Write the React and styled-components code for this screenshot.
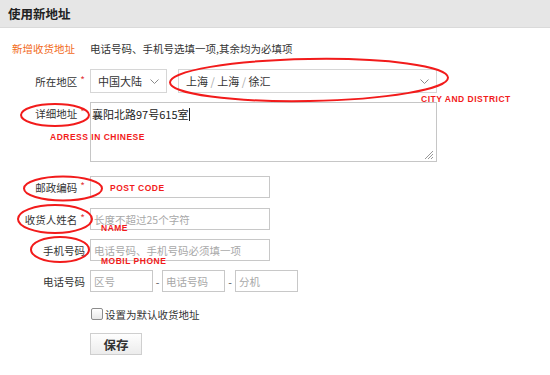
import React from 'react'
import styled, { createGlobalStyle } from 'styled-components'

const Global = createGlobalStyle`
  html, body {
    margin: 0;
    padding: 0;
    background: #fff;
  }
  body {
    font-family: "Noto Sans CJK SC", "Noto Sans", sans-serif;
    color: #333;
  }
`

const Chevron = () => (
  <svg width="9" height="5" viewBox="0 0 9 5">
    <path d="M0.5 0.5 L4.5 4.5 L8.5 0.5" fill="none" stroke="#8a8a8a" strokeWidth="1" />
  </svg>
)

const Grip = () => (
  <svg width="10" height="10" viewBox="0 0 10 10">
    <path d="M1 9 L9 1 M4 9 L9 4 M7 9 L9 7" stroke="#999" strokeWidth="1" fill="none" />
  </svg>
)

const App = () => {
  return (
    <Page>
      <Global />
      <Header>
        <Title>使用新地址</Title>
      </Header>
      <Form>
        <Intro>
          <Tag>新增收货地址</Tag>
          <Hint>电话号码、手机号选填一项,其余均为必填项</Hint>
        </Intro>

        <Row $top={13}>
          <Label $h={24}>所在地区<Star>*</Star></Label>
          <Select $w={77}>
            <span>中国大陆</span>
            <Chevron />
          </Select>
          <Select $w={259} $ml={11}>
            <span>上海 <Sep>/</Sep> 上海 <Sep>/</Sep> 徐汇</span>
            <Chevron />
          </Select>
        </Row>

        <Row $top={9}>
          <Label $h={22}>详细地址<Star>*</Star></Label>
          <TextArea>
            <span>襄阳北路97号615室</span>
            <Caret />
            <GripBox><Grip /></GripBox>
          </TextArea>
        </Row>

        <Row $top={14}>
          <Label $h={22}>邮政编码<Star>*</Star></Label>
          <Input $w={180} />
        </Row>

        <Row $top={10}>
          <Label $h={22}>收货人姓名<Star>*</Star></Label>
          <Input $w={180}><Placeholder>长度不超过25个字符</Placeholder></Input>
        </Row>

        <Row $top={9}>
          <Label $h={22}>手机号码</Label>
          <Input $w={180}><Placeholder>电话号码、手机号码必须填一项</Placeholder></Input>
        </Row>

        <Row $top={9}>
          <Label $h={22}>电话号码</Label>
          <Input $w={63}><Placeholder>区号</Placeholder></Input>
          <Dash $w={9}>-</Dash>
          <Input $w={63}><Placeholder>电话号码</Placeholder></Input>
          <Dash $w={10}>-</Dash>
          <Input $w={63}><Placeholder>分机</Placeholder></Input>
        </Row>

        <Row $top={14}>
          <Label $h={16} />
          <Check>
            <Box />
            设置为默认收货地址
          </Check>
        </Row>

        <Row $top={11}>
          <Label $h={22} />
          <SaveButton>保存</SaveButton>
        </Row>
      </Form>

      <Marks>
        <svg width="550" height="375" viewBox="0 0 550 375">
          <g fill="none" stroke="#f21b1b" strokeWidth="2">
            <ellipse cx="309" cy="80" rx="139" ry="21" transform="rotate(-1 309 80)" />
            <ellipse cx="55" cy="115" rx="34" ry="11" />
            <ellipse cx="63" cy="188.5" rx="39" ry="12" />
            <ellipse cx="55" cy="219" rx="37" ry="14" />
            <ellipse cx="60" cy="249.5" rx="29" ry="12.5" />
          </g>
        </svg>
        <Note $x={421} $y={94}>CITY AND DISTRICT</Note>
        <Note $x={50} $y={132}>ADRESS IN CHINESE</Note>
        <Note $x={110} $y={183}>POST CODE</Note>
        <Note $x={101} $y={223}>NAME</Note>
        <Note $x={101} $y={256}>MOBIL PHONE</Note>
      </Marks>
    </Page>
  )
}

export default App

const Page = styled.div`
position: relative;
width: 550px;
height: 375px;
overflow: hidden;
font-size: 10.5px;
`

const Header = styled.div`
height: 27px;
background-color: #e6e6e6;
border-bottom: 1px solid #dadada;
display: flex;
align-items: center;
padding-left: 8px;
`

const Title = styled.h1`
margin: 0;
font-size: 12.5px;
font-weight: bold;
color: #222;
`

const Form = styled.div`
display: flex;
flex-direction: column;
padding-top: 12px;
`

const Intro = styled.div`
display: flex;
align-items: center;
height: 16px;
`

const Tag = styled.div`
width: 90px;
box-sizing: border-box;
padding-left: 12px;
color: #f26a21;
`

const Hint = styled.div`
color: #333;
`

const Row = styled.div`
display: flex;
align-items: flex-start;
margin-top: ${p => p.$top}px;
`

const Label = styled.div`
width: 90px;
height: ${p => p.$h}px;
box-sizing: border-box;
padding-right: 5px;
display: flex;
align-items: center;
justify-content: flex-end;
color: #333;
white-space: nowrap;
`

const Star = styled.span`
color: #e4393c;
margin-left: 3px;
font-size: 10px;
position: relative;
top: -2px;
`

const Select = styled.div`
width: ${p => p.$w}px;
margin-left: ${p => p.$ml || 0}px;
height: 24px;
box-sizing: border-box;
border: 1px solid #d6d6d6;
display: flex;
align-items: center;
justify-content: space-between;
padding: 0 7px 0 7px;
color: #333;
font-size: 11px;
`

const Sep = styled.span`
color: #aaa;
`

const TextArea = styled.div`
position: relative;
width: 347px;
height: 60px;
box-sizing: border-box;
border: 1px solid #c6c6c6;
padding: 2px 1px;
font-size: 11px;
line-height: 18px;
color: #222;
display: flex;
align-items: flex-start;
`

const Caret = styled.span`
display: inline-block;
width: 1px;
height: 13px;
margin-top: 3px;
background: #222;
`

const GripBox = styled.div`
position: absolute;
right: 2px;
bottom: 1px;
display: flex;
`

const Input = styled.div`
width: ${p => p.$w}px;
height: 22px;
box-sizing: border-box;
border: 1px solid #c8c8c8;
display: flex;
align-items: center;
padding-left: 3px;
`

const Placeholder = styled.span`
color: #a8a8a8;
`

const Dash = styled.div`
width: ${p => p.$w}px;
height: 22px;
display: flex;
align-items: center;
justify-content: center;
color: #555;
`

const Check = styled.label`
display: flex;
align-items: center;
height: 16px;
gap: 2px;
color: #333;
`

const Box = styled.span`
display: inline-block;
width: 10px;
height: 10px;
margin-left: 1px;
border: 1px solid #8c8c8c;
border-radius: 2px;
background: linear-gradient(#fff, #e8e8e8);
`

const SaveButton = styled.button`
width: 52px;
height: 22px;
border: 1px solid #cfcfcf;
background: linear-gradient(#fefefe, #ececec);
font-family: "Noto Sans CJK SC", sans-serif;
font-size: 12.5px;
font-weight: bold;
color: #333;
padding: 0;
`

const Marks = styled.div`
position: absolute;
inset: 0;
pointer-events: none;
svg {
  position: absolute;
  left: 0;
  top: 0;
}
`

const Note = styled.span`
position: absolute;
left: ${p => p.$x}px;
top: ${p => p.$y}px;
font-family: "Liberation Sans", Arial, sans-serif;
font-size: 8.5px;
font-weight: bold;
letter-spacing: 0.5px;
line-height: 10px;
color: #f21b1b;
white-space: nowrap;
`
